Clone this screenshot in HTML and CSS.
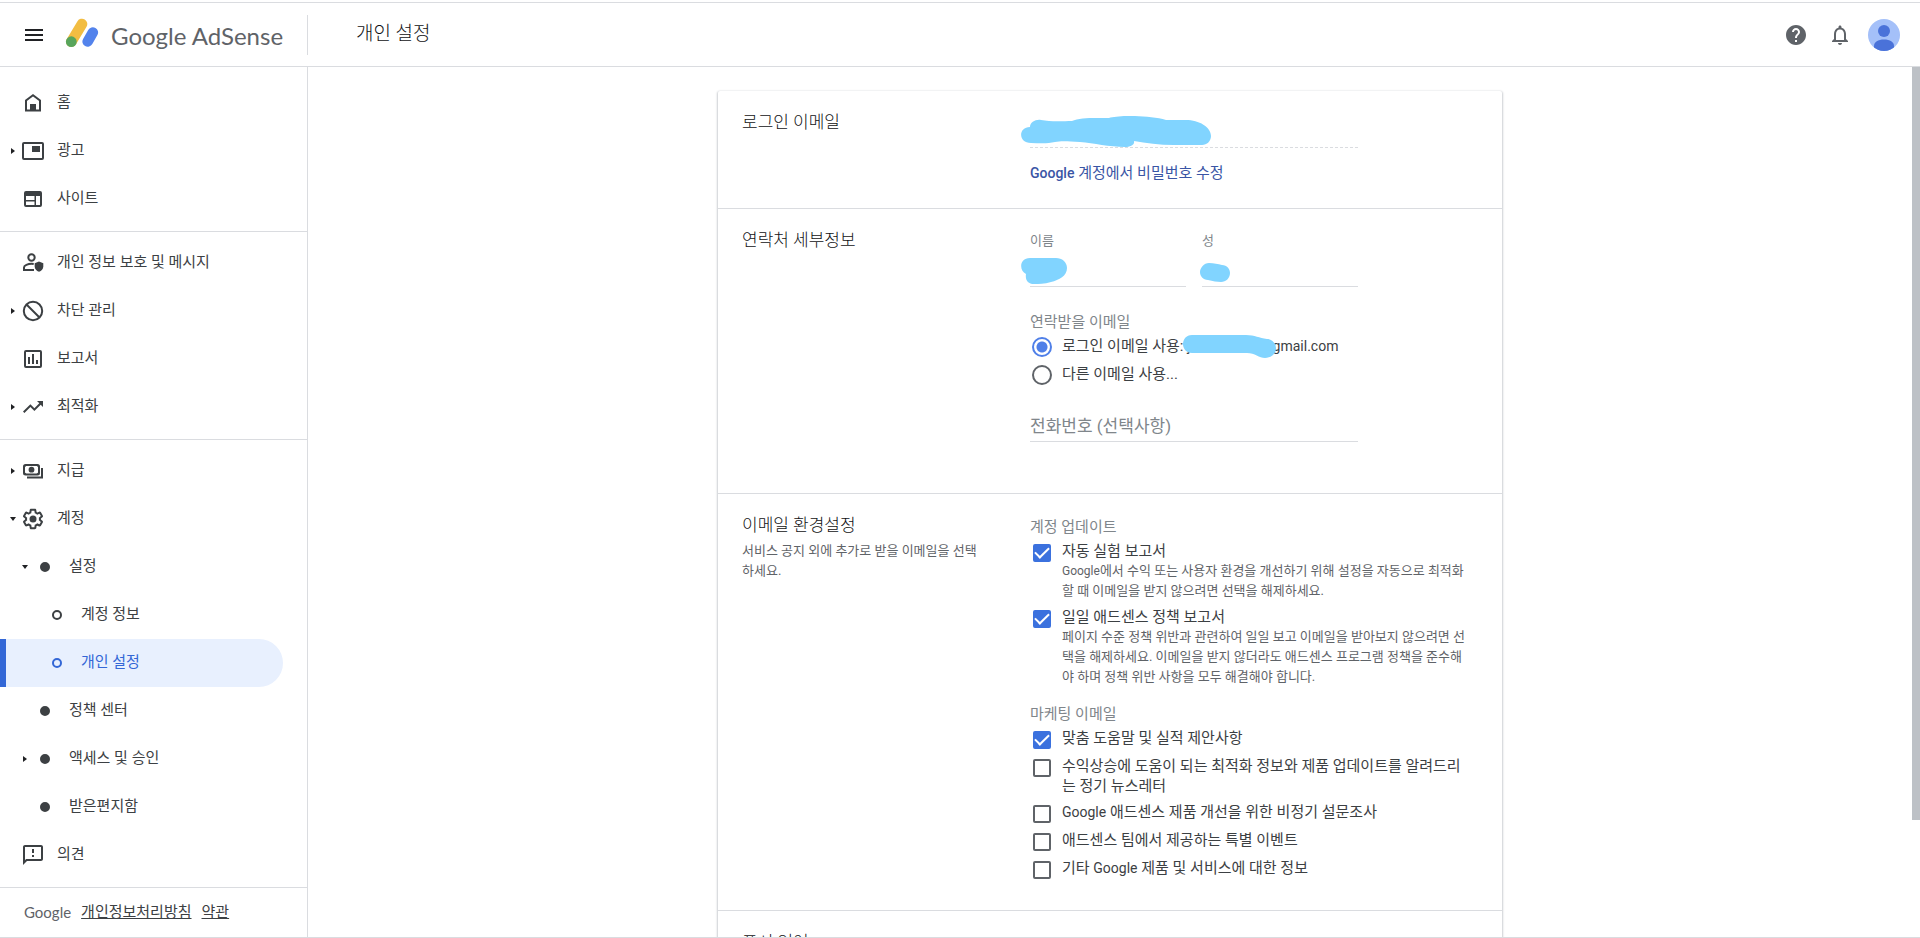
FILE: index.html
```
<!DOCTYPE html>
<html lang="ko">
<head>
<meta charset="utf-8">
<meta name="viewport" content="width=device-width, initial-scale=1">
<title>Google AdSense - 개인 설정</title>
<link rel="stylesheet" href="styles.css">
</head>
<body>
<header class="topbar">
  <div class="brand">
    <button class="icon-button" type="button" aria-label="메뉴">
      <svg class="icon icon-black" viewBox="0 0 24 24"><path d="M3 6h18v2H3zM3 11h18v2H3zM3 16h18v2H3z"/></svg>
    </button>
    <svg class="logo-mark" viewBox="0 0 34 34" aria-hidden="true">
      <path d="M17 6 6.300 23.700" fill="none" stroke="#f2bd42" stroke-width="10.600" stroke-linecap="round"/>
      <circle cx="6.300" cy="23.700" r="5.400" fill="#58a55c"/>
      <path d="M27.800 14.500 22.700 23.500" fill="none" stroke="#5383ec" stroke-width="10.600" stroke-linecap="round"/>
    </svg>
    <span class="logo-text">Google AdSense</span>
  </div>
  <h1 class="page-title">개인 설정</h1>
  <div class="actions">
    <button class="icon-button help" type="button" aria-label="도움말">
      <svg class="icon icon-gray" viewBox="0 0 24 24"><path d="M12 2C6.480 2 2 6.480 2 12s4.480 10 10 10 10-4.480 10-10S17.520 2 12 2zm1 17h-2v-2h2v2zm2.070-7.750l-.9.920C13.450 12.900 13 13.500 13 15h-2v-.5c0-1.100.45-2.100 1.170-2.830l1.240-1.260c.37-.36.590-.86.590-1.410 0-1.100-.9-2-2-2s-2 .9-2 2H8c0-2.210 1.790-4 4-4s4 1.790 4 4c0 .88-.36 1.680-.93 2.250z"/></svg>
    </button>
    <button class="icon-button" type="button" aria-label="알림">
      <svg class="icon icon-gray" viewBox="0 0 24 24"><path d="M12 22c1.100 0 2-.9 2-2h-4c0 1.100.9 2 2 2zm6-6v-5c0-3.070-1.630-5.640-4.500-6.320V4c0-.83-.67-1.500-1.500-1.500s-1.500.67-1.500 1.500v.68C7.640 5.360 6 7.920 6 11v5l-2 2v1h16v-1l-2-2zm-2 1H8v-6c0-2.480 1.510-4.500 4-4.500s4 2.020 4 4.500v6z"/></svg>
    </button>
    <button class="icon-button" type="button" aria-label="Google 계정">
      <svg class="avatar" viewBox="0 0 32 32"><defs><clipPath id="disc"><circle cx="16" cy="16" r="16"/></clipPath></defs><g clip-path="url(#disc)"><path fill="#a4c0f9" d="M0 0h32v32H0z"/><circle cx="16" cy="12" r="6" fill="#4a72d9"/><path fill="#4a72d9" d="M6 33v-6c0-4 4-6.500 10-6.500S26 23 26 27v6z"/></g></svg>
    </button>
  </div>
</header>

<div class="shell">
  <nav class="sidebar" aria-label="기본 메뉴">
    <ul class="nav-group">
      <li><a class="nav-item" href="#"><span class="arrow"></span>
        <svg class="icon" viewBox="0 0 24 24"><path d="M5 19.500V9.500L12 4.300l7 5.200v10z" fill="none" stroke="currentColor" stroke-width="2"/><path d="M9 13h6v7H9z"/></svg>
        <span>홈</span></a></li>
      <li><a class="nav-item" href="#"><span class="arrow closed"></span>
        <svg class="icon" viewBox="0 0 24 24"><rect x="2" y="4" width="20" height="16" rx="1" fill="none" stroke="currentColor" stroke-width="2"/><path d="M11 7h8v6h-8z"/></svg>
        <span>광고</span></a></li>
      <li><a class="nav-item" href="#"><span class="arrow"></span>
        <svg class="icon" viewBox="0 0 24 24"><rect x="4" y="5" width="16" height="14" rx="1" fill="none" stroke="currentColor" stroke-width="2"/><path d="M4 5h16v4H4zM5 13h9v1.500H5zM13.500 9H15v10h-1.500z"/></svg>
        <span>사이트</span></a></li>
    </ul>
    <ul class="nav-group">
      <li><a class="nav-item" href="#"><span class="arrow"></span>
        <svg class="icon" viewBox="0 0 24 24"><circle cx="10.500" cy="6.500" r="3.200" fill="none" stroke="currentColor" stroke-width="2"/><path d="M13 19H3v-2.500c0-2.200 4-3.700 7.500-3.700.8 0 1.500.1 2.200.2" fill="none" stroke="currentColor" stroke-width="2"/><path d="M18 10.500l4.300 1.800v3.200c0 2.500-1.800 4.500-4.300 5.300-2.500-.8-4.300-2.800-4.300-5.300v-3.200z"/></svg>
        <span>개인 정보 보호 및 메시지</span></a></li>
      <li><a class="nav-item" href="#"><span class="arrow closed"></span>
        <svg class="icon" viewBox="0 0 24 24"><g fill="none" stroke="currentColor" stroke-width="2"><circle cx="12" cy="12" r="9.200"/><path d="M5.500 5.500l13 13"/></g></svg>
        <span>차단 관리</span></a></li>
      <li><a class="nav-item" href="#"><span class="arrow"></span>
        <svg class="icon" viewBox="0 0 24 24"><rect x="4" y="4" width="16" height="16" rx="1" fill="none" stroke="currentColor" stroke-width="2"/><path d="M7 10h2v7H7zM11 7h2v10h-2zM15 13h2v4h-2z"/></svg>
        <span>보고서</span></a></li>
      <li><a class="nav-item" href="#"><span class="arrow closed"></span>
        <svg class="icon" viewBox="0 0 24 24"><path d="M16 6l2.290 2.290-4.880 4.880-4-4L2 16.590 3.410 18l6-6 4 4 6.300-6.290L22 12V6z"/></svg>
        <span>최적화</span></a></li>
    </ul>
    <ul class="nav-group">
      <li><a class="nav-item" href="#"><span class="arrow closed"></span>
        <svg class="icon" viewBox="0 0 24 24"><rect x="3" y="6" width="15" height="9.500" rx="1.500" fill="none" stroke="currentColor" stroke-width="2"/><circle cx="10.500" cy="10.700" r="2.900"/><path d="M3 6h3L3 9zM18 6v3l-3-3zM3 15.500v-3l3 3zM18 15.500h-3l3-3z"/><path d="M21 9v9.500H6" fill="none" stroke="currentColor" stroke-width="2"/></svg>
        <span>지급</span></a></li>
      <li><a class="nav-item" href="#"><span class="arrow open"></span>
        <svg class="icon" viewBox="0 0 24 24"><path d="M13.850 22.250h-3.700c-.74 0-1.360-.54-1.450-1.270l-.27-1.890c-.27-.14-.53-.29-.79-.46l-1.800.72c-.7.26-1.470-.03-1.810-.65L2.200 15.530c-.35-.66-.2-1.440.36-1.880l1.530-1.190c-.01-.15-.02-.3-.02-.46 0-.15.01-.31.02-.46l-1.520-1.190c-.59-.45-.74-1.260-.37-1.880l1.850-3.190c.34-.62 1.110-.9 1.790-.63l1.810.73c.26-.17.52-.32.78-.46l.27-1.910c.09-.7.71-1.250 1.440-1.250h3.700c.74 0 1.360.54 1.450 1.270l.27 1.890c.27.14.53.29.79.46l1.800-.72c.71-.26 1.480.03 1.820.65l1.840 3.180c.36.66.2 1.440-.36 1.880l-1.520 1.190c.01.15.02.3.02.46s-.01.31-.02.46l1.520 1.190c.56.45.72 1.230.37 1.860l-1.860 3.220c-.34.62-1.110.9-1.800.63l-1.800-.72c-.26.17-.52.32-.78.46l-.27 1.910c-.1.68-.72 1.220-1.460 1.220zm-3.230-2h2.760l.37-2.550.53-.22c.44-.18.88-.44 1.340-.78l.45-.34 2.380.96 1.380-2.400-2.030-1.580.07-.56c.03-.26.06-.51.06-.78s-.03-.53-.06-.78l-.07-.56 2.030-1.580-1.390-2.400-2.390.96-.45-.35c-.42-.32-.87-.58-1.330-.77l-.52-.22-.37-2.550h-2.760l-.37 2.550-.53.21c-.44.19-.88.44-1.340.79l-.45.33-2.380-.95-1.390 2.390 2.030 1.580-.07.56a7 7 0 0 0-.06.79c0 .26.02.53.06.78l.07.56-2.030 1.580 1.380 2.400 2.390-.96.45.35c.43.33.86.58 1.330.77l.53.22.38 2.550z"/><circle cx="12" cy="12" r="3.500"/></svg>
        <span>계정</span></a>
        <ul class="nav-sub">
          <li><a class="nav-item level-2" href="#"><span class="arrow open"></span><span class="bullet"></span><span>설정</span></a>
            <ul class="nav-sub">
              <li><a class="nav-item level-3" href="#"><span class="arrow"></span><span class="bullet ring"></span><span>계정 정보</span></a></li>
              <li><a class="nav-item level-3 selected" href="#" aria-current="page"><span class="arrow"></span><span class="bullet ring"></span><span>개인 설정</span></a></li>
            </ul>
          </li>
          <li><a class="nav-item level-2" href="#"><span class="arrow"></span><span class="bullet"></span><span>정책 센터</span></a></li>
          <li><a class="nav-item level-2" href="#"><span class="arrow closed"></span><span class="bullet"></span><span>액세스 및 승인</span></a></li>
          <li><a class="nav-item level-2" href="#"><span class="arrow"></span><span class="bullet"></span><span>받은편지함</span></a></li>
        </ul>
      </li>
      <li><a class="nav-item" href="#"><span class="arrow"></span>
        <svg class="icon" viewBox="0 0 24 24"><path d="M20 2H4c-1.100 0-1.990.9-1.990 2L2 22l4-4h14c1.100 0 2-.9 2-2V4c0-1.100-.9-2-2-2zm0 14H5.170l-.59.590-.58.580V4h16v12zM11 12h2v2h-2zM11 6h2v4h-2z"/></svg>
        <span>의견</span></a></li>
    </ul>
    <footer class="nav-footer">
      <span class="footer-logo">Google</span>
      <a href="#">개인정보처리방침</a>
      <a href="#">약관</a>
    </footer>
  </nav>

  <main class="content">
    <form class="card">
      <section class="section login">
        <div class="section-head"><h2>로그인 이메일</h2></div>
        <div class="section-body">
          <div class="field narrow">
            <input class="text-input dashed" type="email" aria-label="로그인 이메일" readonly>
            <svg class="redact redact-login" viewBox="0 0 190 32" aria-hidden="true"><path d="M9 11c0-5 6-8 11-7 10 2 23 1 31 1 8-4 26-3 37-3C98-1 128-1 145 4h20c13 0 25 7 25 16 0 5-4 9-9 9h-28c-15 0-28-2-40-4 1 4-4 6-9 6-16 0-31-4-45-5-14-1-20-1-25 0-8 2-17 1-24 1C-3 27-3 11 9 11z"/></svg>
          </div>
          <a class="account-link" href="#"><span class="latin strong">Google</span> 계정에서 비밀번호 수정</a>
        </div>
      </section>

      <section class="section">
        <div class="section-head"><h2>연락처 세부정보</h2></div>
        <div class="section-body contact">
          <div class="name-row narrow">
            <div class="field">
              <label class="field-label" for="given">이름</label>
              <input class="text-input" id="given" type="text">
              <svg class="redact redact-given" viewBox="0 0 46 26" aria-hidden="true"><path d="M9 0h26c6 0 11 4 11 10 0 8-8 12-16 14-7 2-12 2-17 2-6 0-9-4-8-10C-2 13-2 0 9 0z"/></svg>
            </div>
            <div class="field">
              <label class="field-label" for="family">성</label>
              <input class="text-input" id="family" type="text" value="A">
              <svg class="redact redact-family" viewBox="0 0 30 19" aria-hidden="true"><path d="M9 0c5 0 9 1 13 2 5 0 8 4 8 8 0 5-4 9-9 9-4 0-8-1-13-2C3 17 0 13 0 9s4-9 9-9z"/></svg>
            </div>
          </div>
          <fieldset class="options">
            <legend>연락받을 이메일</legend>
            <label class="option"><input class="radio" type="radio" name="contact" checked><span>로그인 이메일 사용: <span class="latin">j</span><span class="hidden-address"><svg class="redact redact-inline" viewBox="0 0 93 23" aria-hidden="true"><path d="M9 0h54c9 0 13 3 21 4 5 0 9 5 9 9 0 6-5 10-11 10-6 0-10-5-18-5H9C-3 18-3 0 9 0z"/></svg></span><span class="latin">gmail.com</span></span></label>
            <label class="option"><input class="radio" type="radio" name="contact"><span>다른 이메일 사용...</span></label>
          </fieldset>
          <div class="field narrow">
            <input class="text-input" type="tel" aria-label="전화번호" placeholder="전화번호 (선택사항)">
          </div>
        </div>
      </section>

      <section class="section">
        <div class="section-head">
          <h2>이메일 환경설정</h2>
          <p class="hint">서비스 공지 외에 추가로 받을 이메일을 선택하세요.</p>
        </div>
        <div class="section-body preferences">
          <fieldset class="options">
            <legend>계정 업데이트</legend>
            <label class="option"><input class="check" type="checkbox" checked><span>자동 실험 보고서<span class="hint"><span class="latin-small">Google</span>에서 수익 또는 사용자 환경을 개선하기 위해 설정을 자동으로 최적화할 때 이메일을 받지 않으려면 선택을 해제하세요.</span></span></label>
            <label class="option"><input class="check" type="checkbox" checked><span>일일 애드센스 정책 보고서<span class="hint">페이지 수준 정책 위반과 관련하여 일일 보고 이메일을 받아보지 않으려면 선택을 해제하세요. 이메일을 받지 않더라도 애드센스 프로그램 정책을 준수해야 하며 정책 위반 사항을 모두 해결해야 합니다.</span></span></label>
          </fieldset>
          <fieldset class="options">
            <legend>마케팅 이메일</legend>
            <label class="option"><input class="check" type="checkbox" checked><span>맞춤 도움말 및 실적 제안사항</span></label>
            <label class="option"><input class="check" type="checkbox"><span>수익상승에 도움이 되는 최적화 정보와 제품 업데이트를 알려드리는 정기 뉴스레터</span></label>
            <label class="option"><input class="check" type="checkbox"><span><span class="latin">Google</span> 애드센스 제품 개선을 위한 비정기 설문조사</span></label>
            <label class="option"><input class="check" type="checkbox"><span>애드센스 팀에서 제공하는 특별 이벤트</span></label>
            <label class="option"><input class="check" type="checkbox"><span>기타 <span class="latin">Google</span> 제품 및 서비스에 대한 정보</span></label>
          </fieldset>
        </div>
      </section>

      <section class="section">
        <div class="section-head"><h2>표시 언어</h2></div>
      </section>
    </form>
  </main>
  <div class="scroll-track" aria-hidden="true"><div class="scroll-thumb"></div></div>
</div>
</body>
</html>
```
FILE: styles.css
```
* {
  box-sizing: border-box;
}

body {
  display: flex;
  flex-direction: column;
  height: 100vh;
  margin: 0;
  padding-top: 2px;
  overflow: hidden;
  background: #fff;
  color: #3c4043;
  font: 400 15px/20px Roboto, "Noto Sans CJK KR", sans-serif;
}

h1, h2, p, ul, fieldset {
  margin: 0;
  padding: 0;
  border: 0;
}

h1, h2 {
  color: #111214;
  font-weight: 300;
}

ul {
  list-style: none;
}

a {
  color: inherit;
}

input, button {
  margin: 0;
  font: inherit;
}

.icon {
  flex: none;
  display: block;
  width: 24px;
  height: 24px;
  fill: currentColor;
}

.icon-black {
  color: #202124;
}

.icon-gray {
  color: #5f6368;
}

.icon-button {
  display: block;
  padding: 0;
  border: 0;
  background: none;
}

/* Top bar */

.topbar {
  flex: none;
  display: flex;
  align-items: center;
  height: 65px;
  padding-right: 20px;
  border-top: 1px solid #dadce0;
  border-bottom: 1px solid #dadce0;
}

.brand {
  display: flex;
  align-items: center;
  width: 308px;
  height: 40px;
  padding-left: 22px;
  border-right: 1px solid #dadce0;
}

.logo-mark {
  width: 34px;
  height: 34px;
  margin-left: 19px;
}

.logo-text {
  margin-left: 12px;
  padding-top: 2px;
  color: #5f6368;
  font: 400 24px/32px Lato, sans-serif;
}

.page-title {
  margin-left: 48px;
  padding-bottom: 2px;
  font-size: 19px;
  line-height: 28px;
}

.actions {
  display: flex;
  align-items: center;
  gap: 16px;
  margin-left: auto;
}

.help {
  margin-right: 4px;
}

.avatar {
  display: block;
  width: 32px;
  height: 32px;
}

/* Side navigation */

.shell {
  flex: 1;
  display: flex;
  min-height: 0;
  border-bottom: 1px solid #dadce0;
}

.sidebar {
  flex: none;
  width: 308px;
  padding-top: 4px;
  overflow: hidden;
  border-right: 1px solid #dadce0;
}

.nav-group {
  padding: 8px 0;
}

.nav-group + .nav-group {
  padding-top: 7px;
  border-top: 1px solid #dadce0;
}

.nav-item {
  display: flex;
  align-items: center;
  height: 48px;
  margin-right: 24px;
  padding-left: 7px;
  text-decoration: none;
}

.nav-item span:last-child {
  margin-left: 12px;
  padding-bottom: 2px;
}

.level-2 {
  padding-left: 19px;
}

.level-3 {
  padding-left: 31px;
}

.selected {
  padding-left: 25px;
  border-left: 6px solid #3367d6;
  border-radius: 0 24px 24px 0;
  background: #e8f0fe;
  color: #3367d6;
}

.arrow {
  flex: none;
  display: grid;
  place-items: center;
  width: 12px;
  height: 12px;
  margin-right: 2px;
}

.closed::before {
  content: "";
  border-style: solid;
  border-width: 3px 0 3px 4px;
  border-color: transparent transparent transparent #202124;
}

.open::before {
  content: "";
  border-style: solid;
  border-width: 4px 3px 0;
  border-color: #202124 transparent transparent;
}

.bullet {
  flex: none;
  width: 10px;
  height: 10px;
  margin: 0 7px;
  border: 5px solid currentColor;
  border-radius: 50%;
}

.ring {
  border-width: 2px;
}

.nav-footer {
  display: flex;
  align-items: center;
  gap: 10px;
  height: 48px;
  padding-left: 24px;
  border-top: 1px solid #dadce0;
}

.footer-logo {
  color: #5f6368;
  font: 400 15px/20px Lato, sans-serif;
}

/* Settings card */

.content {
  flex: 1;
  min-width: 0;
  padding: 24px 16px 0;
  overflow: hidden;
}

.card {
  max-width: 784px;
  margin: 0 auto;
  border-radius: 2px;
  box-shadow: 0 1px 2px 1px #cdd0d4;
}

.section {
  display: grid;
  grid-template-columns: 312px minmax(0, 1fr);
  padding: 20px 0 24px;
}

.section + .section {
  border-top: 1px solid #dadce0;
}

.section-head {
  padding: 0 48px 0 24px;
}

.section-head h2 {
  font-size: 17px;
  line-height: 22px;
}

.section-head .hint {
  margin-top: 5px;
}

.section-body {
  padding-right: 34px;
}

.narrow {
  width: 328px;
  max-width: 100%;
}

.hint {
  display: block;
  color: #5f6368;
  font-size: 13px;
  word-break: break-all;
}

.latin {
  font-size: 14px;
}

.latin-small {
  font-size: 12px;
}

.strong {
  font-weight: 500;
}

.field {
  position: relative;
}

.field-label {
  display: block;
  padding-top: 2px;
  color: #80868b;
  font-size: 13px;
}

.text-input {
  display: block;
  width: 100%;
  height: 36px;
  padding: 4px 0 0;
  border: 0;
  border-bottom: 1px solid #dadce0;
  border-radius: 0;
  outline: 0;
  background: none;
  color: #202124;
  font-size: 17px;
}

.text-input::placeholder {
  color: #80868b;
  opacity: 1;
}

.dashed {
  height: 37px;
  border-bottom-style: dashed;
}

.login {
  padding-bottom: 8px;
}

.account-link {
  display: block;
  margin: 15px 0 17px;
  color: #3a55a5;
  text-decoration: none;
}

.name-row {
  display: grid;
  grid-template-columns: 1fr 1fr;
  gap: 16px;
  padding-bottom: 5px;
}

.options {
  display: flex;
  flex-direction: column;
  gap: 6px;
}

.options legend {
  margin-bottom: 4px;
  padding: 0;
  color: #80868b;
}

.contact {
  display: flex;
  flex-direction: column;
  gap: 20px;
  padding-bottom: 27px;
}

.preferences {
  display: flex;
  flex-direction: column;
  gap: 17px;
  padding-top: 3px;
  padding-bottom: 6px;
}

.option {
  display: flex;
  align-items: flex-start;
  min-height: 22px;
  word-break: break-all;
}

.radio,
.check {
  appearance: none;
  flex: none;
  border: 2px solid #5f6368;
}

.radio {
  width: 20px;
  height: 20px;
  margin: 1px 10px 0 2px;
  border-radius: 50%;
}

.radio:checked {
  border-color: #4f7fe8;
  background: radial-gradient(circle, #4f7fe8 5px, transparent 6px);
}

.check {
  width: 18px;
  height: 18px;
  margin: 3px 11px 0 3px;
  border-radius: 2px;
}

.check:checked {
  display: grid;
  place-items: center;
  border-color: #3b71de;
  background: #3b71de;
}

.check:checked::before {
  content: "";
  width: 6px;
  height: 12px;
  margin-top: -5px;
  border: solid #fff;
  border-width: 0 2px 2px 0;
  transform: rotate(45deg);
}

/* Scribbles that cover private values */

.redact {
  position: absolute;
  fill: #81d4ff;
}

.redact-login {
  top: 5px;
  left: -9px;
  width: 190px;
  height: 32px;
}

.redact-given {
  bottom: 3px;
  left: -9px;
  width: 46px;
  height: 26px;
}

.redact-family {
  bottom: 5px;
  left: -2px;
  width: 30px;
  height: 19px;
}

.hidden-address {
  display: inline-block;
  position: relative;
  width: 82px;
  height: 12px;
}

.redact-inline {
  top: -4px;
  right: -3px;
  width: 93px;
  height: 23px;
}

/* Scroll indicator */

.scroll-track {
  flex: none;
  width: 8px;
}

.scroll-thumb {
  height: 86.5%;
  background: #bdc1c6;
}
```
